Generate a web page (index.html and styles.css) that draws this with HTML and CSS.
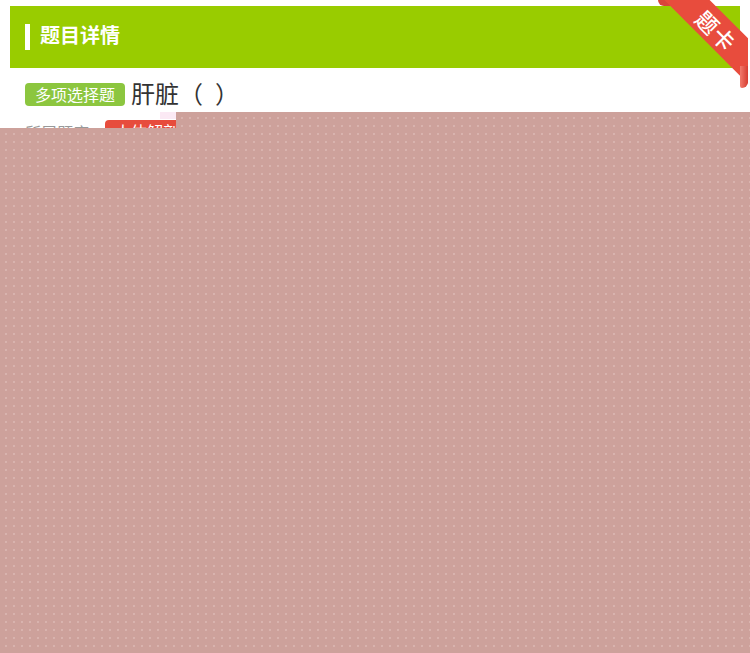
FILE: index.html
```html
<!DOCTYPE html>
<html lang="zh-CN">
<head>
<meta charset="utf-8">
<title>题目详情</title>
<link rel="stylesheet" href="styles.css">
</head>
<body>
<div class="page">
  <div class="header">
    <span class="header-bar"></span>
    <span class="header-title">题目详情</span>
  </div>
  <div class="question">
    <span class="type-tag">多项选择题</span>
    <span class="question-text">肝脏（<span class="gap"></span>）</span>
  </div>
  <div class="meta">
    <span class="meta-label">所属题库：</span>
    <span class="bank-tag">人体解剖学</span>
  </div>
  <div class="ribbon">
    <div class="ribbon-cap"></div>
    <div class="ribbon-band"><span class="ribbon-text">题卡</span></div>
  </div>
  <div class="ribbon-fold"></div>
</div>
<div class="mask-glow"></div>
<div class="mask mask-top"></div>
<div class="mask mask-main"></div>
</body>
</html>
```
FILE: styles.css
```css
html, body {
  margin: 0;
  padding: 0;
  background: #ffffff;
  font-family: "Noto Sans CJK SC", "Noto Sans", sans-serif;
}
.page {
  position: relative;
  width: 750px;
  height: 653px;
  overflow: hidden;
}
.header {
  margin: 6px 10px 0 10px;
  height: 62px;
  background: #99cc00;
  display: flex;
  align-items: center;
  padding-left: 15px;
}
.header-bar {
  width: 5px;
  height: 26px;
  background: #ffffff;
  margin-right: 10px;
}
.header-title {
  color: #ffffff;
  font-size: 20px;
  font-weight: bold;
  line-height: 26px;
  margin-bottom: 5px;
}
.question {
  display: flex;
  align-items: center;
  margin: 11px 0 0 25px;
  height: 28px;
}
.type-tag {
  background: #8cc63f;
  color: #ffffff;
  font-size: 16px;
  line-height: 23px;
  height: 23px;
  padding: 0 10px;
  border-radius: 4px;
  margin-right: 6px;
  margin-top: 2px;
}
.question-text {
  font-size: 24px;
  color: #333333;
  line-height: 28px;
  display: flex;
  align-items: center;
}
.gap {
  display: inline-block;
  width: 12px;
}
.meta {
  display: flex;
  align-items: flex-start;
  margin: 13px 0 0 25px;
}
.meta-label {
  font-size: 16px;
  color: #999999;
  line-height: 22px;
  margin-top: 1px;
}
.bank-tag {
  background: #e74c3c;
  color: #ffffff;
  font-size: 16px;
  line-height: 22px;
  padding: 0 10px;
  border-radius: 4px;
}
.ribbon {
  position: absolute;
  left: 652px;
  top: 0;
  width: 96px;
  height: 90px;
  overflow: hidden;
  border-bottom-right-radius: 6px;
}
.ribbon-cap {
  position: absolute;
  left: 6px;
  top: 0;
  width: 16px;
  height: 6px;
  background: #d9443a;
  border-bottom-left-radius: 6px;
}
.ribbon-band {
  position: absolute;
  left: -3px;
  top: 16px;
  width: 140px;
  height: 32px;
  background: #e84c3d;
  transform: rotate(45deg);
  display: flex;
  align-items: center;
  justify-content: center;
}
.ribbon-text {
  color: #ffffff;
  font-size: 22px;
  font-weight: 500;
  line-height: 24px;
  letter-spacing: 1px;
  margin-left: -6px;
}
.ribbon-fold {
  position: absolute;
  left: 740px;
  top: 66px;
  width: 8px;
  height: 22px;
  background: linear-gradient(90deg, #f27a6c, #d63c30);
  border-bottom-right-radius: 6px;
  border-bottom-left-radius: 2px;
}
.mask-glow {
  position: absolute;
  left: 160px;
  top: 112px;
  width: 16px;
  height: 7px;
  background: #fbe9f4;
}
.mask {
  position: absolute;
  background-color: #cda19b;
  background-image: radial-gradient(circle, #d8b3ae 0.7px, transparent 1.1px);
  background-size: 8px 8px;
  background-position: 2px 2px;
}
.mask-top {
  left: 176px;
  top: 112px;
  width: 574px;
  height: 16px;
}
.mask-main {
  left: 0;
  top: 128px;
  width: 750px;
  height: 525px;
}
```
